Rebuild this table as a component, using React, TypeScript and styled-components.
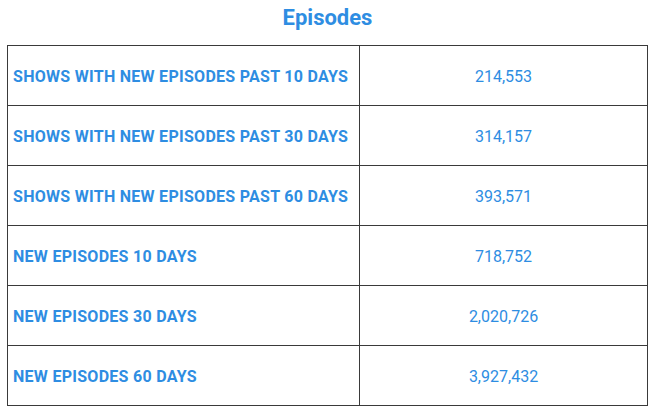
import React from "react";
import styled, { createGlobalStyle } from "styled-components";

const Global = createGlobalStyle`
  html, body { margin: 0; padding: 0; background: #ffffff; }
  body { font-family: Roboto, "Noto Sans", Arial, sans-serif; }
`;

const Page = styled.div`
  padding: 0 8px 0 7px;
  display: flex;
  flex-direction: column;
  align-items: stretch;
`;

const Title = styled.h2`
  margin: 0;
  height: 45px;
  display: flex;
  align-items: center;
  justify-content: center;
  padding-bottom: 11px;
  box-sizing: border-box;
  font-size: 22px;
  font-weight: 700;
  color: #2e8de2;
`;

const Table = styled.table`
  width: 641px;
  border-collapse: collapse;
  table-layout: fixed;
`;

const Row = styled.tr`
  height: 60px;
`;

const Label = styled.td`
  width: 352px;
  border: 1px solid #3a3a3a;
  padding: 2px 5px 0;
  font-size: 16px;
  font-weight: 700;
  letter-spacing: 0.28px;
  color: #2e8de2;
  text-transform: uppercase;
  box-sizing: border-box;
  white-space: nowrap;
`;

const Value = styled.td`
  border: 1px solid #3a3a3a;
  padding: 2px 0 0;
  text-align: center;
  font-size: 16px;
  font-weight: 400;
  color: #2e8de2;
`;

const rows: [string, string][] = [
  ["Shows with new episodes past 10 days", "214,553"],
  ["Shows with new episodes past 30 days", "314,157"],
  ["Shows with new episodes past 60 days", "393,571"],
  ["New episodes 10 days", "718,752"],
  ["New episodes 30 days", "2,020,726"],
  ["New episodes 60 days", "3,927,432"],
];

export default function App() {
  return (
    <>
      <Global />
      <Page>
        <Title>Episodes</Title>
        <Table>
          <tbody>
            {rows.map(([l, v]) => (
              <Row key={l}>
                <Label>{l}</Label>
                <Value>{v}</Value>
              </Row>
            ))}
          </tbody>
        </Table>
      </Page>
    </>
  );
}
